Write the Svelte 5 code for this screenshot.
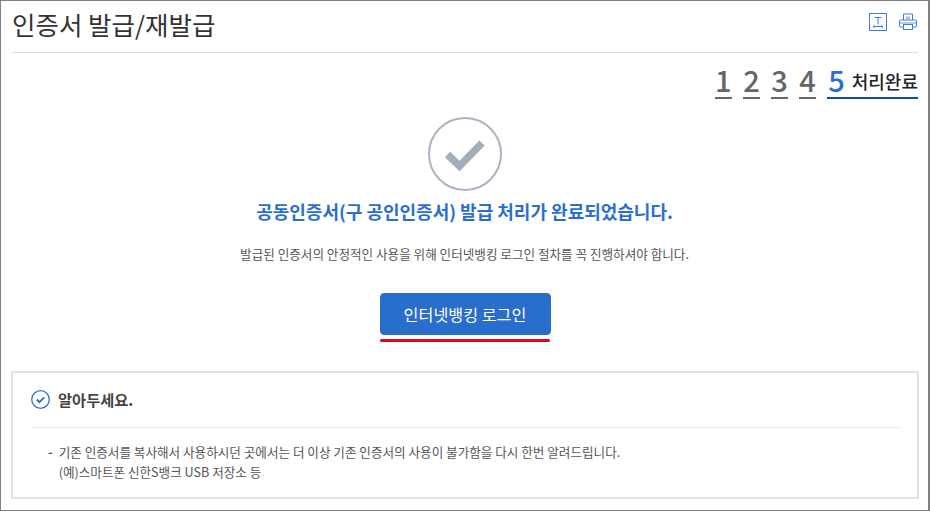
<script>
	const steps = ["1", "2", "3", "4"];
</script>

<main class="page">
	<header class="head">
		<h1>인증서 발급/재발급</h1>
		<div class="tools">
			<svg width="18" height="18" viewBox="0 0 18 18" fill="none" stroke="#3f7fd6">
				<rect x="0.5" y="0.5" width="17" height="17" />
				<path d="M5.500 4.500h7M9 4.500v7M4 13.500h10M4 13.500l1.500-1.200M4 13.500l1.500 1.200M14 13.500l-1.500-1.200M14 13.500l-1.500 1.200" />
			</svg>
			<svg width="18" height="18" viewBox="0 0 18 18" fill="none" stroke="#3f7fd6">
				<path d="M4.500 7V1h9v6M4 14H1.500a1 1 0 0 1-1-1V8a1 1 0 0 1 1-1h15a1 1 0 0 1 1 1v5a1 1 0 0 1-1 1H14" />
				<rect x="4.500" y="11.500" width="9" height="5" />
				<rect x="7" y="3.500" width="4" height="3" fill="#9dbde8" stroke="none" />
				<path d="M1 10h16" stroke-width="0.8" />
			</svg>
		</div>
	</header>

	<div class="steps">
		{#each steps as n}
			<span class="step">{n}</span>
		{/each}
		<span class="step current"><b>5</b><em>처리완료</em></span>
	</div>

	<section class="done">
		<div class="circle">
			<svg width="42" height="34" viewBox="0 0 42 34" fill="none">
				<path d="M3.500 17.500L15.500 29L38 6" stroke="#a2aebc" stroke-width="7.500" />
			</svg>
		</div>
		<h2>공동인증서(구 공인인증서) 발급 처리가 완료되었습니다.</h2>
		<p>발급된 인증서의 안정적인 사용을 위해 인터넷뱅킹 로그인 절차를 꼭 진행하셔야 합니다.</p>
		<button type="button">인터넷뱅킹 로그인</button>
		<div class="redline"></div>
	</section>

	<section class="notice">
		<div class="notice-title">
			<svg width="19" height="19" viewBox="0 0 18 18" fill="none" stroke="#2a6fd0">
				<circle cx="9" cy="9" r="8.300" stroke-width="1.200" />
				<path d="M5.500 9l2.500 2.500L12.500 7" stroke-width="1.800" />
			</svg>
			<strong>알아두세요.</strong>
		</div>
		<div class="notice-body">
			<span class="dash">-</span>
			<div>
				기존 인증서를 복사해서 사용하시던 곳에서는 더 이상 기존 인증서의 사용이 불가함을 다시 한번 알려드립니다.<br />
				(예)스마트폰 신한S뱅크 USB 저장소 등
			</div>
		</div>
	</section>
</main>

<style>
	:global(body) {
		margin: 0;
		background: #fff;
	}
	.page {
		box-sizing: border-box;
		width: 930px;
		height: 511px;
		border: 1px solid #808080;
		border-width: 1px 2px 1px 1px;
		padding: 0 10px;
		font-family: "Noto Sans CJK KR", "Liberation Sans", sans-serif;
		color: #444;
		overflow: hidden;
	}
	.head {
		display: flex;
		justify-content: space-between;
		height: 51px;
		border-bottom: 1px solid #dedede;
		padding-left: 1px;
	}
	h1 {
		margin: 0;
		font-size: 25.500px;
		font-weight: 400;
		line-height: 45px;
		color: #333;
	}
	.tools {
		display: flex;
		gap: 12px;
		padding-top: 12px;
		margin-right: 1px;
	}
	.steps {
		display: flex;
		justify-content: flex-end;
		align-items: flex-end;
		gap: 10.500px;
		height: 46px;
	}
	.step {
		font-size: 29px;
		line-height: 20px;
		color: #666;
		font-weight: 500;
		border-bottom: 2px solid #666;
		padding: 0 0.500px 8px;
	}
	.step.current {
		display: flex;
		align-items: flex-start;
		gap: 7px;
		margin-left: 0.500px;
		color: #2a6fd0;
		border-bottom-color: #0f4ea8;
		padding: 0 0 6px 1px;
	}
	.step b {
		font-weight: 500;
	}
	.step em {
		margin-top: 2px;
		font-style: normal;
		font-size: 18px;
		font-weight: 500;
		color: #222;
	}
	.done {
		display: flex;
		flex-direction: column;
		align-items: center;
		padding-top: 18px;
	}
	.circle {
		box-sizing: border-box;
		width: 74px;
		height: 74px;
		border: 2px solid #a9b3c1;
		border-radius: 50%;
		display: flex;
		align-items: center;
		justify-content: center;
	}
	h2 {
		margin: 3px 0 0;
		font-size: 18px;
		line-height: 34px;
		font-weight: 700;
		color: #2a6fd0;
	}
	.done p {
		margin: 16px 0 0;
		font-size: 12.600px;
		line-height: 20px;
		color: #555;
	}
	button {
		margin: 29px 0 0 1px;
		width: 171px;
		height: 42px;
		border: 1px solid #2a6fd0;
		border-radius: 4px;
		background: #2a6ecb;
		color: #fff;
		font-family: inherit;
		font-size: 16.200px;
		padding: 0;
	}
	.redline {
		width: 170px;
		height: 3px;
		margin-top: 4px;
		border-radius: 2px;
		background: #e0081c;
	}
	.notice {
		box-sizing: border-box;
		margin-top: 29px;
		width: 908px;
		height: 128px;
		border: 2px solid #dfe3ea;
		padding: 0 18px;
	}
	.notice-title {
		box-sizing: border-box;
		display: flex;
		align-items: center;
		gap: 8px;
		height: 55px;
		padding-bottom: 2px;
		border-bottom: 1px solid #e4e4e4;
	}
	.notice-title strong {
		font-size: 15.300px;
		color: #444;
	}
	.notice-body {
		display: flex;
		gap: 6px;
		margin-top: 14px;
		padding-left: 17px;
		font-size: 12.600px;
		line-height: 20px;
		color: #555;
	}
	.dash {
		font-weight: 700;
	}
</style>
